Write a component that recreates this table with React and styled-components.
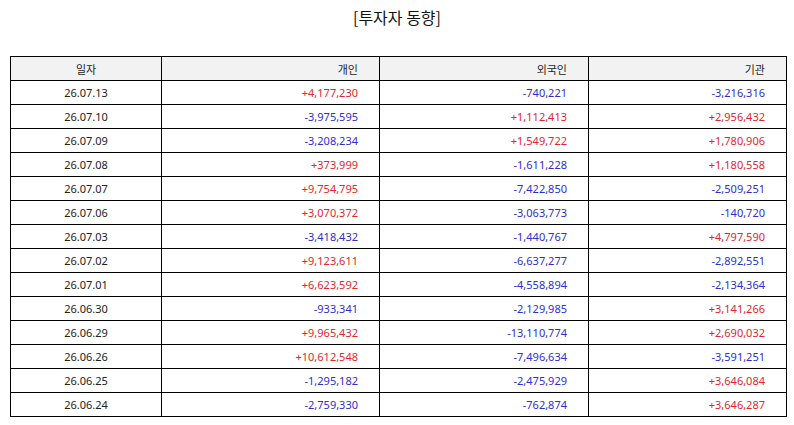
import React from "react";
import styled, { createGlobalStyle } from "styled-components";

const GlobalStyle = createGlobalStyle`
  body {
    margin: 0;
    background: #fff;
    font-family: "Noto Sans", "Noto Sans CJK KR", sans-serif;
  }
`;

const rows = [
  ["26.07.13", "+4,177,230", "-740,221", "-3,216,316"],
  ["26.07.10", "-3,975,595", "+1,112,413", "+2,956,432"],
  ["26.07.09", "-3,208,234", "+1,549,722", "+1,780,906"],
  ["26.07.08", "+373,999", "-1,611,228", "+1,180,558"],
  ["26.07.07", "+9,754,795", "-7,422,850", "-2,509,251"],
  ["26.07.06", "+3,070,372", "-3,063,773", "-140,720"],
  ["26.07.03", "-3,418,432", "-1,440,767", "+4,797,590"],
  ["26.07.02", "+9,123,611", "-6,637,277", "-2,892,551"],
  ["26.07.01", "+6,623,592", "-4,558,894", "-2,134,364"],
  ["26.06.30", "-933,341", "-2,129,985", "+3,141,266"],
  ["26.06.29", "+9,965,432", "-13,110,774", "+2,690,032"],
  ["26.06.26", "+10,612,548", "-7,496,634", "-3,591,251"],
  ["26.06.25", "-1,295,182", "-2,475,929", "+3,646,084"],
  ["26.06.24", "-2,759,330", "-762,874", "+3,646,287"],
];

const Page = styled.div`
  padding: 5px 10px 0 10px;
`;

const Title = styled.h1`
  margin: 0 0 27px;
  text-align: center;
  font-family: "Noto Sans CJK KR", sans-serif;
  font-size: 16px;
  font-weight: 400;
  line-height: 24px;
  color: #111;
`;

const Table = styled.table`
  width: 776px;
  border-collapse: collapse;
  table-layout: fixed;
  font-size: 11px;
  color: #222;
`;

const HeadCell = styled.th`
  height: 23px;
  padding: 0 21px;
  border: 1.5px solid #000;
  background: #f2f2f2;
  font-weight: 400;
  text-align: ${(p) => (p.$center ? "center" : "right")};
  font-family: "Noto Sans CJK KR", sans-serif;
`;

const Cell = styled.td`
  height: 23px;
  padding: 0 21px;
  border: 1.5px solid #000;
  text-align: ${(p) => (p.$center ? "center" : "right")};
  color: ${(p) => (p.$tone === "up" ? "#e3262c" : p.$tone === "down" ? "#2e2ecf" : "#222")};
`;

const tone = (v) => (v.startsWith("+") ? "up" : "down");

export default function App() {
  return (
    <Page>
      <GlobalStyle />
      <Title>[투자자 동향]</Title>
      <Table>
        <colgroup>
          <col style={{ width: 151 }} />
          <col style={{ width: 218 }} />
          <col style={{ width: 209 }} />
          <col style={{ width: 198 }} />
        </colgroup>
        <thead>
          <tr>
            <HeadCell $center>일자</HeadCell>
            <HeadCell>개인</HeadCell>
            <HeadCell>외국인</HeadCell>
            <HeadCell>기관</HeadCell>
          </tr>
        </thead>
        <tbody>
          {rows.map(([date, a, b, c]) => (
            <tr key={date}>
              <Cell $center>{date}</Cell>
              <Cell $tone={tone(a)}>{a}</Cell>
              <Cell $tone={tone(b)}>{b}</Cell>
              <Cell $tone={tone(c)}>{c}</Cell>
            </tr>
          ))}
        </tbody>
      </Table>
    </Page>
  );
}
